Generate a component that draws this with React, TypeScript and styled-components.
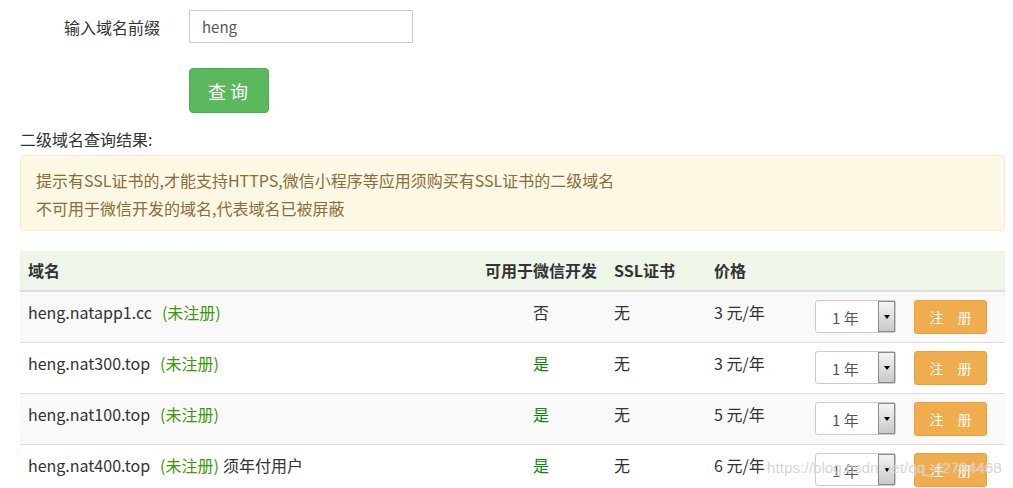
import styled, { createGlobalStyle } from "styled-components";

const GlobalStyle = createGlobalStyle`
  body {
    margin: 0;
    background: #fff;
    color: #333;
    font-family: "Noto Sans CJK SC", "Noto Sans", sans-serif;
  }
`;

const Page = styled.div`
  position: relative;
  width: 1013px;
  height: 488px;
  overflow: hidden;
  box-sizing: border-box;
  padding: 10px 8px 0 20px;
`;

const FormRow = styled.div`
  display: grid;
  grid-template-columns: 169px 224px;
  align-items: center;
`;

const FormLabel = styled.label`
  text-align: right;
  padding-right: 29px;
  font-size: 16px;
  color: #333;
`;

const TextInput = styled.input`
  box-sizing: border-box;
  width: 224px;
  height: 33px;
  border: 1px solid #ccc;
  padding: 0 12px;
  font-family: "Noto Sans CJK SC", sans-serif;
  font-size: 15px;
  color: #555;
  outline: none;
`;

const ActionRow = styled.div`
  margin: 25px 0 0 169px;
`;

const QueryButton = styled.button`
  width: 80px;
  height: 45px;
  background: #5cb85c;
  border: 1px solid #4cae4c;
  border-radius: 4px;
  color: #fff;
  font-family: "Noto Sans CJK SC", sans-serif;
  font-size: 18px;
  letter-spacing: 4px;
  padding: 0 0 0 2px;
`;

const SectionTitle = styled.div`
  margin-top: 15px;
  font-size: 16px;
  line-height: 22px;
`;

const Notice = styled.div`
  margin-top: 5px;
  padding: 10px 15px 8px;
  background: #fcf8e3;
  border: 1px solid #faebcc;
  border-radius: 4px;
  color: #8a6d3b;
  font-size: 16px;
  line-height: 28px;
`;

const COLS = "456px 130px 100px 101px 99px 99px";

const Table = styled.div`
  margin-top: 20px;
  width: 985px;
`;

const HeadRow = styled.div`
  display: grid;
  grid-template-columns: ${COLS};
  background: #eef5e9;
  border-bottom: 2px solid #ddd;
`;

const HeadCell = styled.div<{ $center?: boolean }>`
  padding: 8px;
  line-height: 23px;
  font-size: 16px;
  font-weight: bold;
  color: #333;
  text-align: ${(p) => (p.$center ? "center" : "left")};
`;

const BodyRow = styled.div<{ $striped: boolean }>`
  display: grid;
  grid-template-columns: ${COLS};
  background: ${(p) => (p.$striped ? "#f9f9f9" : "#fff")};
  border-bottom: 1px solid #ddd;
`;

const Cell = styled.div<{ $center?: boolean }>`
  padding: 8px;
  line-height: 24px;
  font-size: 16px;
  color: #333;
  text-align: ${(p) => (p.$center ? "center" : "left")};
`;

const Status = styled.span`
  color: #3b9a07;
  margin-left: 10px;
`;

const Note = styled.span`
  margin-left: 4px;
`;

const WechatFlag = styled.span<{ $ok: boolean }>`
  color: ${(p) => (p.$ok ? "#0a8a0a" : "#333")};
`;

const YearSelect = styled.div`
  box-sizing: border-box;
  width: 81px;
  height: 33px;
  border: 1px solid #ccc;
  border-radius: 3px;
  background: #fff;
  display: flex;
  align-items: stretch;
  font-size: 15px;
  color: #555;
`;

const SelectValue = styled.span`
  flex: 1;
  display: flex;
  align-items: center;
  padding-left: 16px;
  padding-top: 2px;
`;

const SelectArrow = styled.span`
  width: 15px;
  border: 1px solid #8a8a8a;
  background: linear-gradient(#f4f4f4, #c9c9c9);
  display: flex;
  align-items: center;
  justify-content: center;
  &::after {
    content: "";
    border-left: 3px solid transparent;
    border-right: 3px solid transparent;
    border-top: 4px solid #000;
  }
`;

const RegisterButton = styled.button`
  width: 73px;
  height: 34px;
  background: #f0ad4e;
  border: 1px solid #eea236;
  border-radius: 3px;
  color: #fff;
  font-family: "Noto Sans CJK SC", sans-serif;
  font-size: 14px;
  padding: 0;
`;

const Watermark = styled.div`
  position: absolute;
  left: 767px;
  top: 459px;
  font-family: "Liberation Sans", sans-serif;
  font-size: 15.3px;
  color: rgba(195, 195, 195, 0.7);
  text-shadow: 0 0 1px rgba(255, 255, 255, 0.8);
  pointer-events: none;
  white-space: nowrap;
`;

const rows = [
  { domain: "heng.natapp1.cc", wechat: false, price: 3, note: "" },
  { domain: "heng.nat300.top", wechat: true, price: 3, note: "" },
  { domain: "heng.nat100.top", wechat: true, price: 5, note: "" },
  { domain: "heng.nat400.top", wechat: true, price: 6, note: "须年付用户" },
];

export default function App() {
  return (
    <Page>
      <GlobalStyle />
      <FormRow>
        <FormLabel>输入域名前缀</FormLabel>
        <TextInput defaultValue="heng" />
      </FormRow>
      <ActionRow>
        <QueryButton>查询</QueryButton>
      </ActionRow>
      <SectionTitle>二级域名查询结果:</SectionTitle>
      <Notice>
        <div>提示有SSL证书的,才能支持HTTPS,微信小程序等应用须购买有SSL证书的二级域名</div>
        <div>不可用于微信开发的域名,代表域名已被屏蔽</div>
      </Notice>
      <Table>
        <HeadRow>
          <HeadCell>域名</HeadCell>
          <HeadCell $center>可用于微信开发</HeadCell>
          <HeadCell>SSL证书</HeadCell>
          <HeadCell>价格</HeadCell>
          <HeadCell />
          <HeadCell />
        </HeadRow>
        {rows.map((r, i) => (
          <BodyRow key={r.domain} $striped={i % 2 === 0}>
            <Cell>
              {r.domain}
              <Status>(未注册)</Status>
              {r.note && <Note>{r.note}</Note>}
            </Cell>
            <Cell $center>
              <WechatFlag $ok={r.wechat}>{r.wechat ? "是" : "否"}</WechatFlag>
            </Cell>
            <Cell>无</Cell>
            <Cell>{r.price} 元/年</Cell>
            <Cell>
              <YearSelect>
                <SelectValue>1 年</SelectValue>
                <SelectArrow />
              </YearSelect>
            </Cell>
            <Cell>
              <RegisterButton>注　册</RegisterButton>
            </Cell>
          </BodyRow>
        ))}
      </Table>
      <Watermark>https://blog.csdn.net/qq_42704468</Watermark>
    </Page>
  );
}
